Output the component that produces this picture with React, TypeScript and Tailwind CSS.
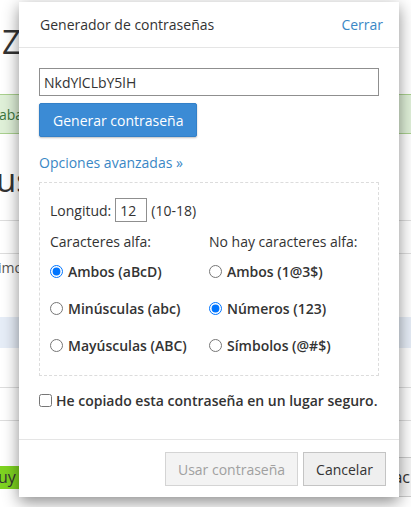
import { useState } from 'react';

const font = { fontFamily: '"Open Sans", "Noto Sans", sans-serif' };

function Radio({ label, checked, onChange }: { label: string; checked: boolean; onChange: () => void }) {
    return (
        <label className="flex items-center gap-[5px] h-[37px] font-semibold text-[#333]">
            <input type="radio" checked={checked} onChange={onChange} className="m-0 w-[13px] h-[13px]" />
            {label}
        </label>
    );
}

export default function App() {
    const [alpha, setAlpha] = useState('both');
    const [nonAlpha, setNonAlpha] = useState('num');
    const [copied, setCopied] = useState(false);

    return (
        <div className="relative w-[411px] h-[507px] overflow-hidden bg-white text-[14px] text-[#333]" style={font}>
            {/* Page behind the dialog */}
            <div className="flex flex-col">
                <div className="h-[22px]" />
                <div className="pl-[2px] text-[33px] leading-[40px] text-[#333]">Zona</div>
                <div className="h-[32px]" />
                <div className="h-[40px] bg-[#dff0d8] border-y border-[#a9d08e] flex items-center text-[#3c763d] text-[14px] -ml-[1px]">
                    abandonar
                </div>
                <div className="h-[26px]" />
                <div className="-ml-[4px] text-[33px] leading-[40px] text-[#333]">usuarios</div>
                <div className="h-[20px]" />
                <div className="h-[33px] border-t border-[#ddd]" />
                <div className="h-[64px] border-t border-[#ddd] pt-[4px] leading-[20px] text-[#555] -ml-[2px]">imo</div>
                <div className="h-[31px] bg-[#e6edf7]" />
                <div className="h-[39px]" />
                <div className="h-[33px] border-t border-[#ddd]" />
                <div className="h-[37px] border-t border-[#ddd]" />
                <div className="flex items-center justify-between">
                    <span className="bg-[#7ed321] text-[#333] text-[16px] leading-[23px] pr-[6px] -ml-[2px]">uy seguro</span>
                    <span className="h-[40px] border border-[#ccc] bg-[#f5f5f5] pl-[4px] pr-[40px] flex items-center text-[16px] -mr-[40px]">ac</span>
                </div>
            </div>

            {/* Dialog */}
            <div className="absolute left-[19px] top-[2px] w-[380px] h-[495px] bg-white shadow-[0_5px_15px_rgba(0,0,0,0.45)] flex flex-col">
                <div className="flex items-center justify-between pl-[21px] pr-[16px] h-[46px] border-b border-[#e5e5e5]">
                    <span className="text-[14px] text-[#333]">Generador de contraseñas</span>
                    <button className="text-[#3a87c5] text-[14px]">Cerrar</button>
                </div>

                <div className="flex-1 px-[20px] pt-[20px]">
                    <input
                        value="NkdYlCLbY5lH"
                        readOnly
                        className="block w-full h-[28px] border border-[#8f8f8f] px-[4px] text-[14px] text-[#333] outline-none"
                        style={font}
                    />
                    <button className="mt-[7px] h-[34px] px-[13px] bg-[#3b8bd5] border border-[#3380c8] text-white rounded-[2px] shadow-[0_1px_2px_rgba(0,0,0,0.25)]">
                        Generar contraseña
                    </button>

                    <div className="mt-[16px] text-[#3a87c5] leading-[20px]">Opciones avanzadas »</div>

                    <div className="mt-[9px] border border-dashed border-[#dcdcdc] px-[10px] pt-[15px] pb-[11px]">
                        <div className="flex items-center gap-[4px] h-[24px]">
                            <span>Longitud:</span>
                            <input
                                value="12"
                                readOnly
                                className="w-[32px] h-[24px] border border-[#8f8f8f] px-[4px] text-[14px] outline-none"
                                style={font}
                            />
                            <span>(10-18)</span>
                        </div>
                        <div className="grid grid-cols-2 mt-[7px]">
                            <div className="flex flex-col">
                                <div className="h-[24px] flex items-center">Caracteres alfa:</div>
                                <Radio label="Ambos (aBcD)" checked={alpha === 'both'} onChange={() => setAlpha('both')} />
                                <Radio label="Minúsculas (abc)" checked={alpha === 'lower'} onChange={() => setAlpha('lower')} />
                                <Radio label="Mayúsculas (ABC)" checked={alpha === 'upper'} onChange={() => setAlpha('upper')} />
                            </div>
                            <div className="flex flex-col">
                                <div className="h-[24px] flex items-center">No hay caracteres alfa:</div>
                                <Radio label="Ambos (1@3$)" checked={nonAlpha === 'both'} onChange={() => setNonAlpha('both')} />
                                <Radio label="Números (123)" checked={nonAlpha === 'num'} onChange={() => setNonAlpha('num')} />
                                <Radio label="Símbolos (@#$)" checked={nonAlpha === 'sym'} onChange={() => setNonAlpha('sym')} />
                            </div>
                        </div>
                    </div>

                    <label className="mt-[14px] flex items-center gap-[4px] font-semibold">
                        <input
                            type="checkbox"
                            checked={copied}
                            onChange={() => setCopied(!copied)}
                            className="m-0 w-[13px] h-[13px]"
                        />
                        He copiado esta contraseña en un lugar seguro.
                    </label>
                </div>

                <div className="flex justify-end gap-[5px] border-t border-[#e5e5e5] pt-[12px] pb-[11px] pr-[13px]">
                    <button disabled className="h-[34px] w-[133px] bg-[#f3f3f3] border border-[#d4d4d4] text-[#a0a0a0]">
                        Usar contraseña
                    </button>
                    <button className="h-[34px] w-[83px] bg-[#efefef] border border-[#c4c4c4] text-[#333]">
                        Cancelar
                    </button>
                </div>
            </div>
        </div>
    );
}
